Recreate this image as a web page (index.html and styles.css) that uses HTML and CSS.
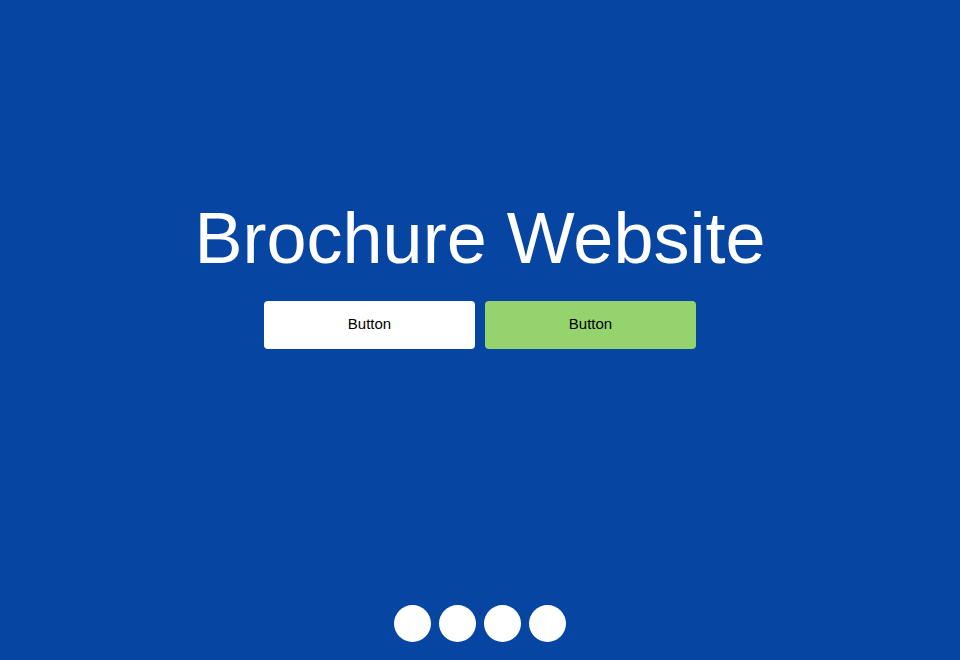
FILE: index.html
```html
<!DOCTYPE html>
<html>
<head>
<meta charset="utf-8">
<link rel="stylesheet" href="styles.css">
</head>
<body>
<div class="page">
  <main class="hero">
    <h1 class="title">Brochure Website</h1>
    <div class="actions">
      <button class="btn btn-white">Button</button>
      <button class="btn btn-green">Button</button>
    </div>
  </main>
  <nav class="dots">
    <span class="dot"></span>
    <span class="dot"></span>
    <span class="dot"></span>
    <span class="dot"></span>
  </nav>
</div>
</body>
</html>
```

FILE: styles.css
```css
html, body {
  margin: 0;
  padding: 0;
  height: 100%;
}
body {
  background: #0745a3;
  font-family: "Liberation Sans", Arial, sans-serif;
}
.page {
  height: 660px;
  display: flex;
  flex-direction: column;
  align-items: center;
}
.hero {
  flex: 1;
  display: flex;
  flex-direction: column;
  align-items: center;
  padding-top: 192px;
}
.title {
  margin: 0;
  color: #fff;
  font-weight: normal;
  font-size: 72px;
  line-height: 92px;
}
.actions {
  display: flex;
  gap: 10px;
  margin-top: 17px;
}
.btn {
  width: 211px;
  height: 48px;
  border: none;
  border-radius: 4px;
  font-family: "Liberation Sans", Arial, sans-serif;
  font-size: 15px;
  color: #000;
  padding: 0 0 3px 0;
}
.btn-white { background: #fff; }
.btn-green { background: #95d46d; }
.dots {
  display: flex;
  gap: 8px;
  margin-bottom: 18px;
}
.dot {
  width: 37px;
  height: 37px;
  border-radius: 50%;
  background: #fff;
}
```
